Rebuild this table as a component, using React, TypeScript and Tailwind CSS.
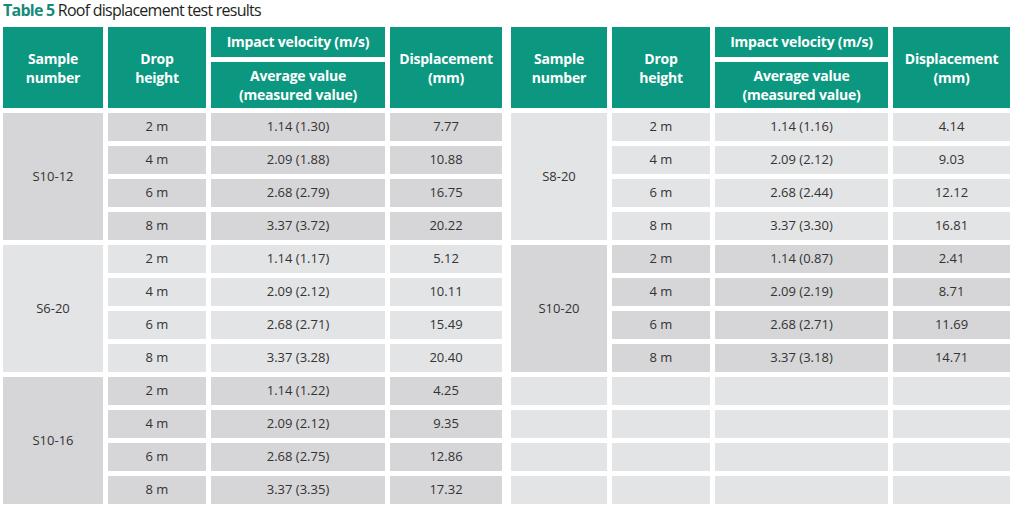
import React from "react";

type Group = { name: string; dark: boolean; split?: boolean; rows: [string, string, string][] };

const leftGroups: Group[] = [
  {
    name: "S10-12",
    dark: true,
    rows: [
      ["2 m", "1.14 (1.30)", "7.77"],
      ["4 m", "2.09 (1.88)", "10.88"],
      ["6 m", "2.68 (2.79)", "16.75"],
      ["8 m", "3.37 (3.72)", "20.22"],
    ],
  },
  {
    name: "S6-20",
    dark: false,
    rows: [
      ["2 m", "1.14 (1.17)", "5.12"],
      ["4 m", "2.09 (2.12)", "10.11"],
      ["6 m", "2.68 (2.71)", "15.49"],
      ["8 m", "3.37 (3.28)", "20.40"],
    ],
  },
  {
    name: "S10-16",
    dark: true,
    rows: [
      ["2 m", "1.14 (1.22)", "4.25"],
      ["4 m", "2.09 (2.12)", "9.35"],
      ["6 m", "2.68 (2.75)", "12.86"],
      ["8 m", "3.37 (3.35)", "17.32"],
    ],
  },
];

const rightGroups: Group[] = [
  {
    name: "S8-20",
    dark: false,
    rows: [
      ["2 m", "1.14 (1.16)", "4.14"],
      ["4 m", "2.09 (2.12)", "9.03"],
      ["6 m", "2.68 (2.44)", "12.12"],
      ["8 m", "3.37 (3.30)", "16.81"],
    ],
  },
  {
    name: "S10-20",
    dark: true,
    rows: [
      ["2 m", "1.14 (0.87)", "2.41"],
      ["4 m", "2.09 (2.19)", "8.71"],
      ["6 m", "2.68 (2.71)", "11.69"],
      ["8 m", "3.37 (3.18)", "14.71"],
    ],
  },
  {
    name: "",
    dark: false,
    split: true,
    rows: [
      ["", "", ""],
      ["", "", ""],
      ["", "", ""],
      ["", "", ""],
    ],
  },
];

const head =
  "bg-[#0b9780] text-white font-bold flex items-center justify-center text-center text-[14px] leading-[19px] tracking-[-0.2px]";

function Table({ groups, cols }: { groups: Group[]; cols: string }) {
  return (
    <div className={`grid ${cols} grid-rows-[30px_46px_repeat(12,28px)] gap-[5px]`}>
      <div className={`${head} row-span-2`}>
        Sample
        <br />
        number
      </div>
      <div className={`${head} row-span-2`}>
        Drop
        <br />
        height
      </div>
      <div className={`${head} pb-[1px]`}>Impact velocity (m/s)</div>
      <div className={`${head} row-span-2`}>
        Displacement
        <br />
        (mm)
      </div>
      <div className={`${head} pb-[1px]`}>
        Average value
        <br />
        (measured value)
      </div>
      {groups.map((g, gi) => {
        const bg = g.dark ? "bg-[#d6d6d8]" : "bg-[#e3e4e5]";
        const cell = `${bg} flex items-center justify-center text-[13px] text-[#333333]`;
        return (
          <React.Fragment key={gi}>
            {!g.split && <div className={`${cell} row-span-4`}>{g.name}</div>}
            {g.rows.map((r, i) => (
              <React.Fragment key={i}>
                {g.split && <div className={cell}></div>}
                <div className={cell}>{r[0]}</div>
                <div className={cell}>{r[1]}</div>
                <div className={cell}>{r[2]}</div>
              </React.Fragment>
            ))}
          </React.Fragment>
        );
      })}
    </div>
  );
}

export default function App() {
  return (
    <div
      className="w-[1018px] h-[511px] bg-white overflow-hidden"
      style={{ fontFamily: '"Open Sans", "Noto Sans", sans-serif' }}
    >
      <div className="pl-[3px] h-[27px] text-[16px] leading-[21px] tracking-[-0.75px] text-[#231f20]">
        <span className="font-bold text-[#168a7b]">Table 5</span> Roof displacement test results
      </div>
      <div className="flex pl-[3px] gap-[9px]">
        <Table groups={leftGroups} cols="grid-cols-[100px_98px_174px_112px]" />
        <Table groups={rightGroups} cols="grid-cols-[96px_98px_173px_117px]" />
      </div>
    </div>
  );
}
